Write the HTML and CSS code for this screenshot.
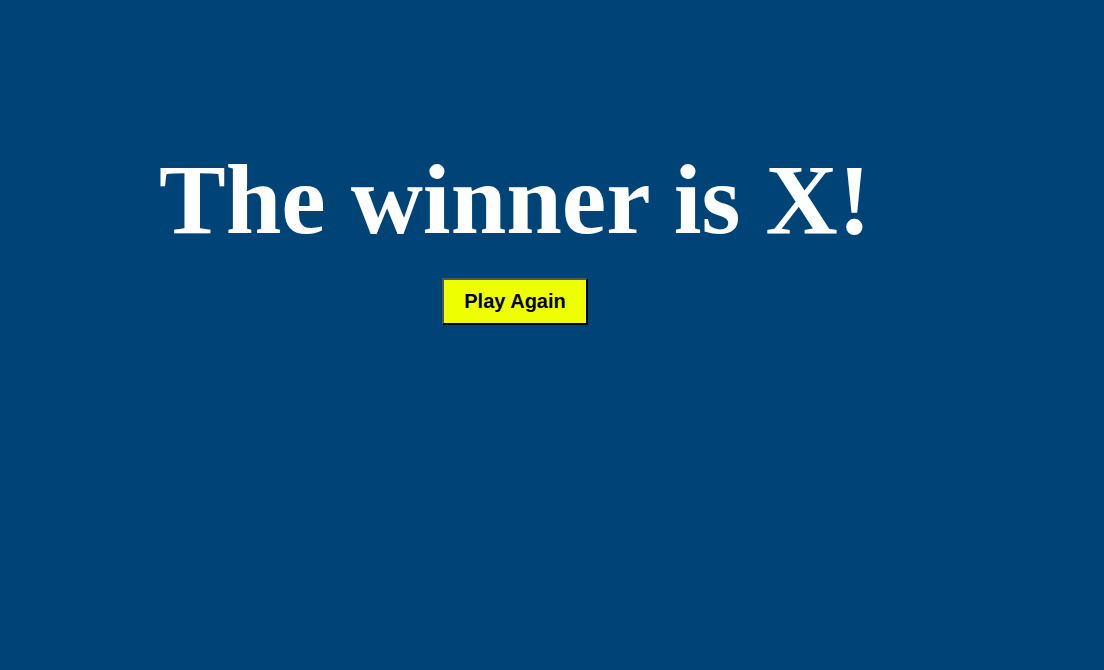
FILE: index.html
```html
<!DOCTYPE html>
<html>
<head>
<meta charset="utf-8">
<link rel="stylesheet" href="styles.css">
</head>
<body>
<main class="result">
  <h1 class="result-title">The winner is X!</h1>
  <button class="play-again">Play Again</button>
</main>
</body>
</html>
```

FILE: styles.css
```css
html, body {
  margin: 0;
  height: 100%;
}
body {
  background: #004477;
}
.result {
  display: flex;
  flex-direction: column;
  align-items: center;
  padding: 140px 74px 0 0;
}
.result-title {
  margin: 0;
  font-family: "Liberation Serif", "Times New Roman", serif;
  font-weight: bold;
  font-size: 100px;
  line-height: 120px;
  color: #ffffff;
}
.play-again {
  margin-top: 18px;
  font-family: "Liberation Sans", Arial, sans-serif;
  font-weight: bold;
  font-size: 20px;
  line-height: 23px;
  padding: 10px 20px;
  background: #eeff00;
  color: #000;
  border: 2px solid;
  border-color: #555 #000 #000 #555;
}
```
